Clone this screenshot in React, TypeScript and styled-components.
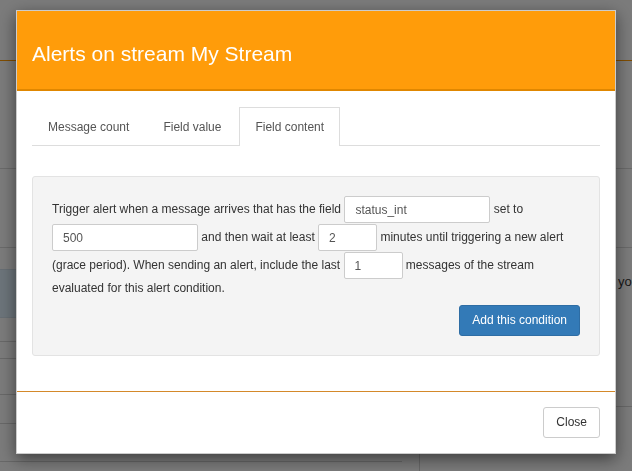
import React from 'react';
import styled, { createGlobalStyle } from 'styled-components';

const GlobalStyle = createGlobalStyle`
  html, body {
    margin: 0;
    padding: 0;
    height: 100%;
    overflow: hidden;
  }
  body {
    font-family: "Liberation Sans", Arial, sans-serif;
    font-size: 12px;
    color: #333;
    background: #f7f7f7;
  }
  * {
    box-sizing: border-box;
  }
`;

/* ---------- page behind the dialog ---------- */

const Page = styled.div`
  min-height: 100vh;
  background: #f7f7f7;
`;

const Navbar = styled.div`
  height: 61px;
  border-bottom: 1px solid #ff9900;
`;

const Band = styled.div<{ $h: number }>`
  height: ${({ $h }) => $h}px;
  border-bottom: 1px solid #d4d4d4;
`;

const Columns = styled.div`
  display: grid;
  grid-template-columns: 419px 1fr;
`;

const LeftCol = styled.div`
  padding-top: 21px;
`;

const RightCol = styled.div`
  padding-top: 25px;
  overflow: hidden;
`;

const Highlight = styled.div`
  height: 49px;
  background: #d8e9f5;
  border-top: 1px solid #cfdde8;
  border-bottom: 1px solid #cfdde8;
`;

const Row = styled.div<{ $h: number; $inset?: number }>`
  height: ${({ $h }) => $h}px;
  margin-right: ${({ $inset }) => $inset ?? 0}px;
  border-bottom: 1px solid #d0d0d0;
`;

const SideText = styled.p`
  margin: 0;
  padding-left: 45px;
  font-size: 13px;
  line-height: 18px;
  white-space: nowrap;
  color: #333;
`;

const SideBox = styled.div`
  height: 134px;
  border-bottom: 1px solid #d0d0d0;
`;

const SideFoot = styled.div`
  margin-top: 33px;
  height: 40px;
  border-left: 1px solid #d0d0d0;
`;

/* ---------- dialog ---------- */

const Backdrop = styled.div`
  position: fixed;
  inset: 0;
  background: rgba(0, 0, 0, 0.5);
`;

const ModalLayer = styled.div`
  position: fixed;
  inset: 0;
  display: flex;
  justify-content: center;
  align-items: flex-start;
  padding-top: 10px;
`;

const Dialog = styled.div`
  width: 600px;
  background: #fff;
  border: 1px solid rgba(0, 0, 0, 0.2);
  box-shadow: 0 5px 15px rgba(0, 0, 0, 0.5);
`;

const Header = styled.div`
  background: #ff9c0a;
  border-bottom: 2px solid #e08700;
  padding: 30px 15px 22px;
`;

const Title = styled.h4`
  margin: 0;
  font-size: 21px;
  line-height: 26px;
  font-weight: normal;
  color: #fff;
`;

const Body = styled.div`
  padding: 16px 15px 15px;
`;

const TabList = styled.div`
  display: flex;
  border-bottom: 1px solid #ddd;
`;

const Tab = styled.div<{ $active?: boolean }>`
  height: ${({ $active }) => ($active ? 39 : 38)}px;
  margin-right: 2px;
  margin-bottom: ${({ $active }) => ($active ? -1 : 0)}px;
  padding: 0 15px;
  display: flex;
  align-items: center;
  border: 1px solid ${({ $active }) => ($active ? '#ddd' : 'transparent')};
  border-bottom: none;
  background: #fff;
  color: #555;
  font-size: 12px;
  cursor: pointer;
`;

const Well = styled.div`
  margin: 30px 0 20px;
  padding: 19px;
  background: #f4f4f4;
  border: 1px solid #e3e3e3;
  border-radius: 3px;
`;

const Sentence = styled.p`
  margin: 0 0 8px;
  line-height: 17px;
  color: #333;
`;

const Field = styled.input<{ $w: number }>`
  display: inline-block;
  width: ${({ $w }) => $w}px;
  height: 27px;
  margin: 0 0 1px;
  padding: 0 10px;
  vertical-align: middle;
  border: 1px solid #ccc;
  border-radius: 2px;
  background: #fff;
  font-family: inherit;
  font-size: 12px;
  color: #555;
  outline: none;
`;

const Actions = styled.div`
  display: flex;
  justify-content: flex-end;
`;

const Button = styled.button<{ $primary?: boolean }>`
  padding: 6px 12px;
  font-family: inherit;
  font-size: 12px;
  line-height: 17px;
  border-radius: 3px;
  border: 1px solid ${({ $primary }) => ($primary ? '#2e6da4' : '#ccc')};
  background: ${({ $primary }) => ($primary ? '#337ab7' : '#fff')};
  color: ${({ $primary }) => ($primary ? '#fff' : '#333')};
  cursor: pointer;
`;

const Footer = styled.div`
  display: flex;
  justify-content: flex-end;
  padding: 15px;
  border-top: 1px solid #d4892a;
`;

export default function App() {
  return (
    <>
      <GlobalStyle />
      <Page>
        <Navbar />
        <Band $h={108} />
        <Band $h={79} />
        <Columns>
          <LeftCol>
            <Highlight />
            <Row $h={24} />
            <Row $h={17} />
            <Row $h={36} />
            <Row $h={29} />
            <Row $h={38} $inset={17} />
          </LeftCol>
          <RightCol>
            <SideBox>
              <SideText>Define the alert conditions you</SideText>
            </SideBox>
            <SideFoot />
          </RightCol>
        </Columns>
      </Page>
      <Backdrop />
      <ModalLayer>
        <Dialog>
          <Header>
            <Title>Alerts on stream My Stream</Title>
          </Header>
          <Body>
            <TabList>
              <Tab>Message count</Tab>
              <Tab>Field value</Tab>
              <Tab $active>Field content</Tab>
            </TabList>
            <Well>
              <Sentence>
                <span>Trigger alert when a message arrives that has the field</span>{' '}
                <Field $w={146} defaultValue="status_int" /> <span>set to</span>{' '}
                <Field $w={146} defaultValue="500" />{' '}
                <span>and then wait at least</span>{' '}
                <Field $w={59} defaultValue="2" />{' '}
                <span>minutes until triggering a new alert</span>{' '}
                <span>(grace period). When sending an alert, include the last</span>{' '}
                <Field $w={59} defaultValue="1" />{' '}
                <span>messages of the stream</span>{' '}
                <span>evaluated for this alert condition.</span>
              </Sentence>
              <Actions>
                <Button $primary>Add this condition</Button>
              </Actions>
            </Well>
          </Body>
          <Footer>
            <Button>Close</Button>
          </Footer>
        </Dialog>
      </ModalLayer>
    </>
  );
}
